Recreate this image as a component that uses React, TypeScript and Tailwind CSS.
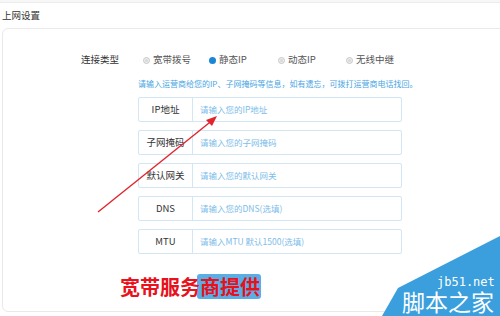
import React from "react";

const rows = [
  { label: "IP地址", ph: "请输入您的IP地址" },
  { label: "子网掩码", ph: "请输入您的子网掩码" },
  { label: "默认网关", ph: "请输入您的默认网关" },
  { label: "DNS", ph: "请输入您的DNS(选填)" },
  { label: "MTU", ph: "请输入MTU 默认1500(选填)" },
];

const radios = [
  { label: "宽带拨号", on: false, w: "w-[66px]" },
  { label: "静态IP", on: true, w: "w-[69px]" },
  { label: "动态IP", on: false, w: "w-[68px]" },
  { label: "无线中继", on: false, w: "w-[68px]" },
];

export default function App() {
  return (
    <div
      className="relative w-[500px] h-[316px] overflow-hidden bg-white text-[#333]"
      style={{ fontFamily: '"Noto Sans CJK SC", "Noto Sans", sans-serif' }}
    >
      <div className="h-[3px] border-b border-[#ececec] bg-[#f7f7f7]" />
      <div className="flex flex-col">
        <div className="pl-[2px] h-[25px] flex items-center text-[9.5px] leading-none text-[#333]">上网设置</div>
        <div className="ml-[2px] w-[520px] border border-[#e9e9e9] rounded-[6px] pt-[24px] pb-[12px]">
          <div className="flex items-center h-[14px] pl-[78px] text-[9.5px] leading-none">
            <div className="w-[62px] text-[#333]">连接类型</div>
            {radios.map((r) => (
              <div key={r.label} className={`flex items-center gap-[3px] ${r.w}`}>
                {r.on ? (
                  <span className="w-[7px] h-[7px] rounded-full bg-[#1a86d8]" />
                ) : (
                  <span className="w-[7px] h-[7px] rounded-full border border-[#c8c8c8] bg-[#eee] flex items-center justify-center">
                    <span className="w-[3px] h-[3px] rounded-full bg-[#d8d8d8]" />
                  </span>
                )}
                <span className="text-[#555]">{r.label}</span>
              </div>
            ))}
          </div>
          <div className="pl-[135px] mt-[11px] h-[12px] flex items-center text-[8px] leading-none text-[#47a5e3]">
            请输入运营商给您的IP、子网掩码等信息，如有遗忘，可拨打运营商电话找回。
          </div>
          <div className="pl-[135px] mt-[7px] flex flex-col gap-[8px]">
            {rows.map((r) => (
              <div
                key={r.label}
                className="flex w-[264px] h-[25px] border border-[#d3e6f4] rounded-[2px] text-[9.5px] leading-none"
              >
                <div className="w-[54px] shrink-0 flex items-center justify-center border-r border-[#d3e6f4] text-[#333]">
                  {r.label}
                </div>
                <div className="flex items-center pl-[7px] text-[8.5px] text-[#7dbdea]">{r.ph}</div>
              </div>
            ))}
          </div>
          <div className="mt-[20px] h-[25px] pl-[117px] flex items-center">
            <span className="relative inline-flex items-center h-[25px]">
              <span className="absolute left-[77px] top-0 w-[64px] h-[25px] rounded-[3px] bg-[#5aaee6]" />
              <span className="relative text-[20px] font-bold leading-none text-[#e8111c]">
                宽带服务商提供
              </span>
            </span>
          </div>
        </div>
      </div>

      {/* red arrow */}
      <svg className="absolute left-0 top-0 pointer-events-none" width="500" height="316">
        <line x1="98" y1="212" x2="214" y2="119" stroke="#e1252c" strokeWidth="1.4" />
        <polygon points="217,116 206,120 212,126" fill="#e1252c" />
      </svg>

      {/* watermark */}
      <svg className="absolute left-0 top-0 pointer-events-none" width="500" height="316">
        <polygon points="382,316 398,288 500,236 500,316" fill="#3a9fdc" />
      </svg>
      <div
        className="absolute left-[437px] top-[276px] whitespace-nowrap text-[12px] leading-none text-white"
        style={{ fontFamily: '"DejaVu Sans Mono", monospace' }}
      >
        jb51.net
      </div>
      <div className="absolute left-[402px] top-[290px] whitespace-nowrap text-[23px] leading-none text-white">
        脚本之家
      </div>
    </div>
  );
}
